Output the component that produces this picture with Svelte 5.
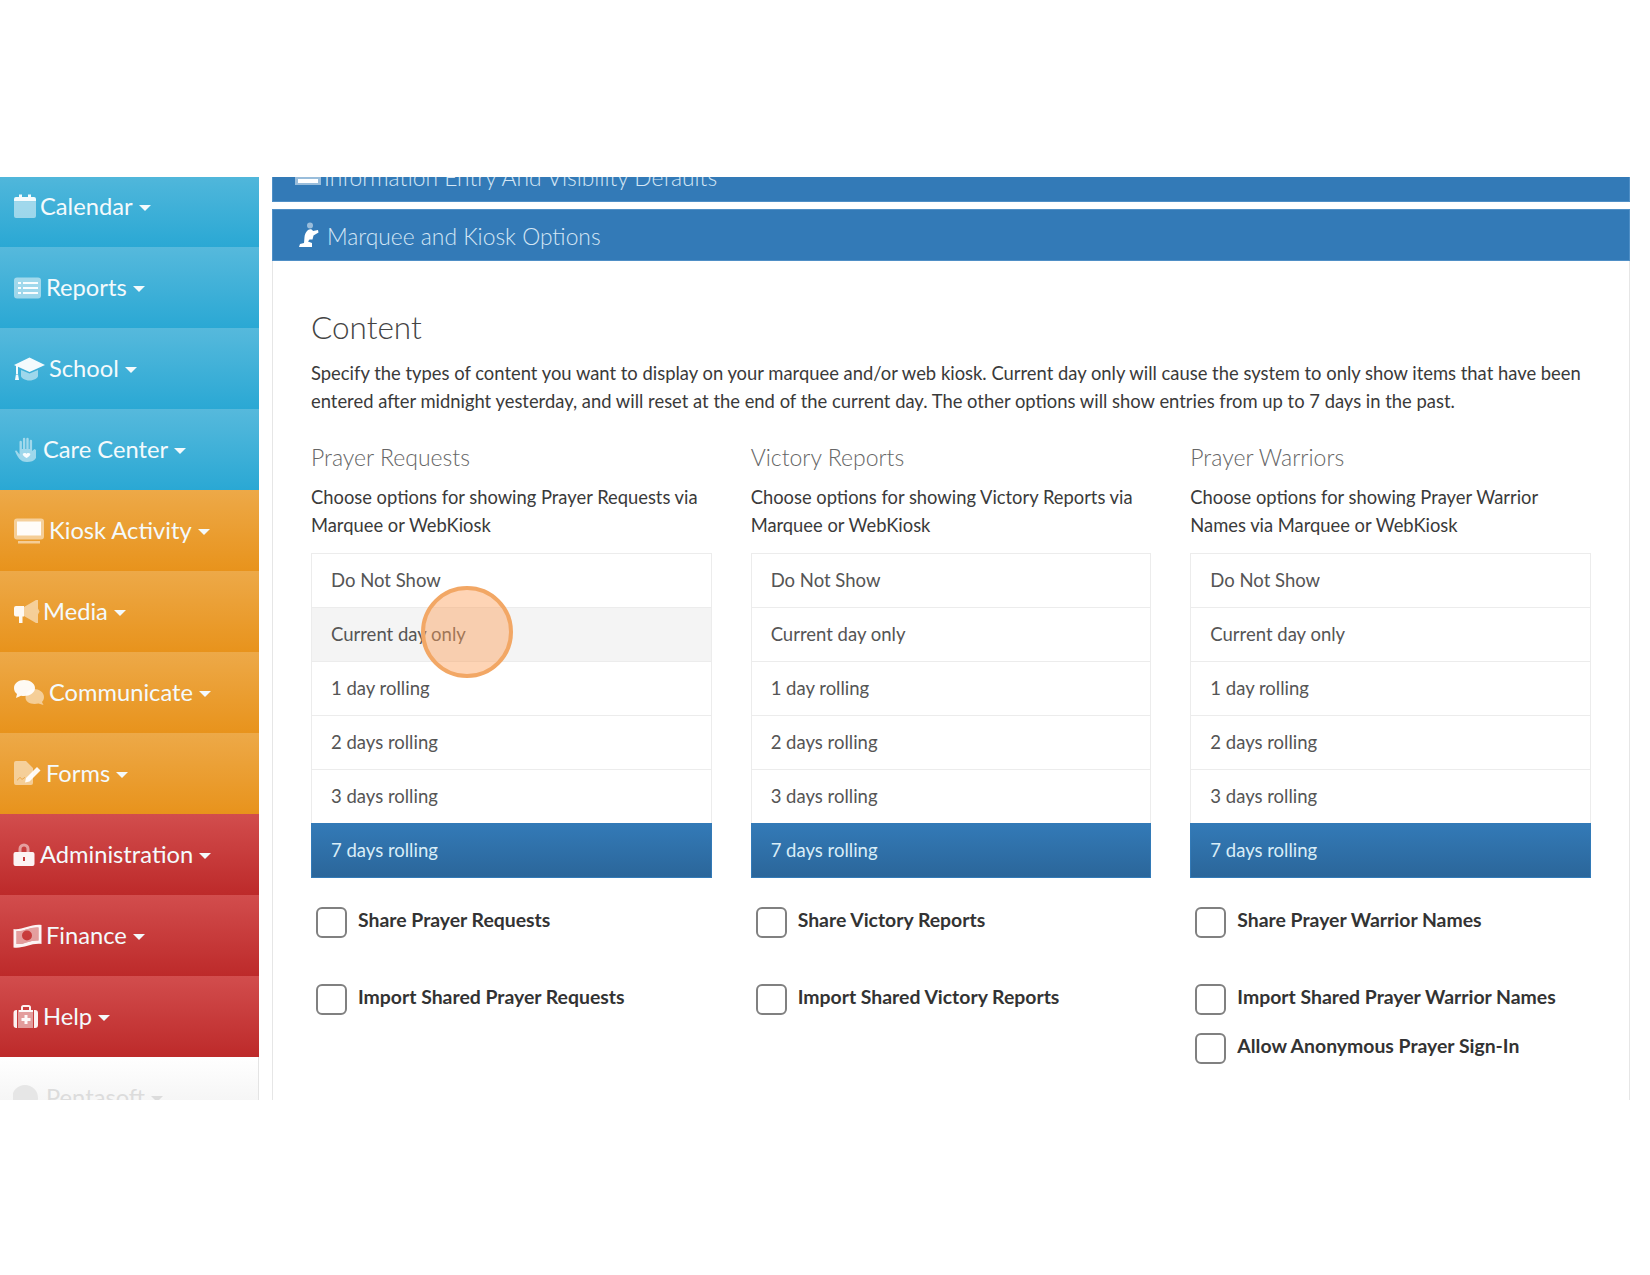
<script lang="ts">
  type NavItem = {
    label: string;
    tone: string;
    width: number;
    soft: string;
    solid: string;
  };

  const navItems: NavItem[] = [
    {
      label: "Calendar",
      tone: "blue",
      width: 27,
      soft: "M1 9h22v14a2 2 0 0 1-2 2H3a2 2 0 0 1-2-2z",
      solid: "M3 4h3V1.500h3V4h6V1.500h3V4h3a2 2 0 0 1 2 2v2.500H1V6a2 2 0 0 1 2-2z",
    },
    {
      label: "Reports",
      tone: "blue",
      width: 33,
      soft: "M4 3.500h21a3 3 0 0 1 3 3v15a3 3 0 0 1-3 3H4a3 3 0 0 1-3-3v-15a3 3 0 0 1 3-3z",
      solid: "M5 8h3v2H5zM10 8h15v2H10zM5 13h3v2H5zM10 13h15v2H10zM5 18h3v2H5zM10 18h15v2H10z",
    },
    {
      label: "School",
      tone: "blue",
      width: 36,
      soft: "M8 15l8.500 3.500L25 15v6c0 2-4 4.500-8.500 4.500S8 23 8 21z",
      solid: "M16.500 2.500L32 10 16.500 17 5 11.800V19l1 6H2l1-6v-8.100L1 10zM3.500 19h1v1h-1z",
    },
    {
      label: "Care Center",
      tone: "blue",
      width: 30,
      soft: "M1.500 15l2-.500 3 4V6a1.200 1.200 0 0 1 2.400 0v7h1V3a1.200 1.200 0 0 1 2.400 0v10h1V3a1.200 1.200 0 0 1 2.400 0v10h1V5a1.200 1.200 0 0 1 2.400 0v10l2.400-2 1.500 1v8c-2 3-5 4-9 4-7 0-9.500-5-12-11z",
      solid: "M10 17.500c1.500-1 3-.500 3.500.5.500-1 2-1.500 3.500-.5 1 1-.5 3-3.500 4.500-3-1.500-4.500-3.500-3.500-4.500z",
    },
    {
      label: "Kiosk Activity",
      tone: "orange",
      width: 36,
      soft: "M4 1.500h24a3 3 0 0 1 3 3v15a3 3 0 0 1-3 3H4a3 3 0 0 1-3-3v-15a3 3 0 0 1 3-3zM5 24h22v2.500H5z",
      solid: "M4 4.500h24v14H4z",
    },
    {
      label: "Media",
      tone: "orange",
      width: 30,
      soft: "M11 9l12-7h2v23h-2l-12-7zM25 10.500l1.500 3-1.500 3z",
      solid: "M3 8h8v10.500H9.500V25H6v-6.500H3a2 2 0 0 1-2-2V10a2 2 0 0 1 2-2z",
    },
    {
      label: "Communicate",
      tone: "orange",
      width: 36,
      soft: "M21 10c5 0 10 3 10 8 0 2-1 4-2 5l1.500 3-5-1.500c-7 1.500-13-1-13-6 0-5 4-8.500 8.500-8.500z",
      solid: "M11 1c6 0 11 3.500 11 8s-5 8-11 8c-1 0-2 0-3-.300L3 19l1-4C2 13.500 1 11.500 1 9c0-4.500 4.500-8 10-8z",
    },
    {
      label: "Forms",
      tone: "orange",
      width: 33,
      soft: "M1 3a2 2 0 0 1 2-2h10l7 7v15a2 2 0 0 1-2 2H3a2 2 0 0 1-2-2zM4 20l3-3 2 2 3-2v.8l-3 2-2-2-3 3z",
      solid: "M13 18l11-11 3.500 3.500-11 11-4.500 1z",
    },
    {
      label: "Administration",
      tone: "red",
      width: 27,
      soft: "M5.500 11V8a5.500 5.500 0 0 1 11 0v3h-3V8a2.500 2.500 0 0 0-5 0v3z",
      solid: "M2.500 11h17a2 2 0 0 1 2 2v10a2 2 0 0 1-2 2h-17a2 2 0 0 1-2-2V13a2 2 0 0 1 2-2zM10 16v4h2v-4z",
    },
    {
      label: "Finance",
      tone: "red",
      width: 33,
      soft: "M3.500 9C10 10 17 4.500 25.500 5.500v13C18 17.500 10 23 3.500 22zM14 8.500a5 5 0 1 0 0 10 5 5 0 0 0 0-10z",
      solid: "M.5 7C9 8.500 18 1.500 28.500 3v19C19 20.500 10 27 .5 25.500zM3.500 9v13C10 23 18 17.500 25.500 18.500v-13C17 4.500 10 10 3.500 9z",
    },
    {
      label: "Help",
      tone: "red",
      width: 30,
      soft: "M5 7h15v18H5z",
      solid: "M8 7V4.500A2.500 2.500 0 0 1 10.500 2h5A2.500 2.500 0 0 1 18 4.500V7h4a3 3 0 0 1 3 3v12a3 3 0 0 1-3 3h-1V7h-1v2H6V7zM3.500 7H4v18h-.500a3 3 0 0 1-3-3V10a3 3 0 0 1 3-3zM10 4v3h6V4zM11.500 12h3v3h3v3h-3v3h-3v-3h-3v-3h3z",
    },
  ];

  const options = [
    "Do Not Show",
    "Current day only",
    "1 day rolling",
    "2 days rolling",
    "3 days rolling",
    "7 days rolling",
  ];

  const columns = [
    {
      title: "Prayer Requests",
      intro: "Choose options for showing Prayer Requests via Marquee or WebKiosk",
      hovered: "Current day only",
      checks: ["Share Prayer Requests", "Import Shared Prayer Requests"],
      extra: "",
    },
    {
      title: "Victory Reports",
      intro: "Choose options for showing Victory Reports via Marquee or WebKiosk",
      hovered: "",
      checks: ["Share Victory Reports", "Import Shared Victory Reports"],
      extra: "",
    },
    {
      title: "Prayer Warriors",
      intro: "Choose options for showing Prayer Warrior Names via Marquee or WebKiosk",
      hovered: "",
      checks: ["Share Prayer Warrior Names", "Import Shared Prayer Warrior Names"],
      extra: "Allow Anonymous Prayer Sign-In",
    },
  ];
</script>

<div class="frame">
  <nav class="sidebar">
    {#each navItems as item}
      <a class="nav-item {item.tone}" href="#top">
        <svg class="nav-icon" width={item.width} height="28" viewBox="0 0 {item.width} 28" aria-hidden="true">
          <path d={item.soft} fill="#fff" opacity="0.5" fill-rule="evenodd" />
          <path d={item.solid} fill="#fff" opacity="0.94" fill-rule="evenodd" />
        </svg>
        <span>{item.label}</span>
        <i class="caret"></i>
      </a>
    {/each}
    <a class="nav-item plain" href="#top">
      <svg class="nav-icon" width="33" height="28" viewBox="0 0 33 28" aria-hidden="true">
        <path d="M12 1a13 13 0 1 0 0 26 13 13 0 0 0 0-26z" fill="#e6e6e6" />
      </svg>
      <span>Pentasoft</span>
      <i class="caret"></i>
    </a>
  </nav>

  <main class="main">
    <div class="panel-heading first">
      <svg width="28" height="24" viewBox="0 0 28 24" aria-hidden="true">
        <path d="M1 12h26v9H1z" fill="#fff" opacity="0.5" />
        <path d="M4 15h20v4H4z" fill="#fff" />
      </svg>
      <span>Information Entry And Visibility Defaults</span>
    </div>

    <div class="panel-heading">
      <svg width="22" height="26" viewBox="0 0 22 26" aria-hidden="true">
        <circle cx="12" cy="3.500" r="3" fill="#fff" opacity="0.5" />
        <path d="M10 8c2-1 4-1 5 1l5-1 .5 2.500-5 3-1 4h-3l-1.500 2 4 1.500V25H1l1-3 4-1 .5-6c0-2 1.500-5.500 3.500-7z" fill="#fff" />
      </svg>
      <span>Marquee and Kiosk Options</span>
    </div>

    <section class="panel-body">
      <h2>Content</h2>
      <p class="lead">
        Specify the types of content you want to display on your marquee and/or web kiosk. Current day only will cause the system to only show items that have been entered after midnight yesterday, and will reset at the end of the current day. The other options will show entries from up to 7 days in the past.
      </p>

      <div class="columns">
        {#each columns as col}
          <div class="column">
            <h3>{col.title}</h3>
            <p class="intro">{col.intro}</p>

            <ul class="list">
              {#each options as option, i}
                <li
                  class:hovered={option === col.hovered}
                  class:active={i === options.length - 1}
                >
                  {option}
                  {#if option === col.hovered}
                    <span class="click-dot"></span>
                  {/if}
                </li>
              {/each}
            </ul>

            <div class="checks">
              {#each col.checks as check}
                <label class="check">
                  <span class="box"></span>
                  <b>{check}</b>
                </label>
              {/each}
              {#if col.extra}
                <label class="check extra">
                  <span class="box"></span>
                  <b>{col.extra}</b>
                </label>
              {/if}
            </div>
          </div>
        {/each}
      </div>
    </section>
  </main>
</div>

<style>
  :global(body) {
    background: #fff;
    font-family: Lato, "Open Sans", sans-serif;
  }

  .frame {
    display: flex;
    width: 1650px;
    height: 923px;
    margin-top: 177px;
    overflow: hidden;
  }

  .sidebar {
    flex: 0 0 259px;
    margin-top: -11px;
  }

  .nav-item {
    display: flex;
    align-items: center;
    height: 81px;
    padding-left: 13px;
    box-sizing: border-box;
    color: #f4fafc;
    font-size: 23.700px;
    text-decoration: none;
  }

  .nav-item span {
    margin-bottom: 2px;
  }

  .nav-item.blue {
    background: linear-gradient(#56b9dc, #2aa8d4);
  }

  .nav-item.orange {
    background: linear-gradient(#eda948, #e8931c);
  }

  .nav-item.red {
    background: linear-gradient(#d24d4d, #bd2a2a);
  }

  .nav-item.plain {
    background: linear-gradient(#fff, #eee);
    color: #dcdcdc;
    border-right: 1px solid #e4e4e4;
  }

  .nav-icon {
    flex: none;
  }

  .caret {
    margin-left: 6px;
    margin-top: 3px;
    border-top: 6px solid currentColor;
    border-left: 6px solid transparent;
    border-right: 6px solid transparent;
  }

  .main {
    position: relative;
    flex: 0 0 1358px;
    margin-left: 13px;
    margin-top: -27px;
  }

  .panel-heading {
    display: flex;
    align-items: center;
    gap: 7px;
    height: 52px;
    padding-left: 25px;
    box-sizing: border-box;
    background: #337ab7;
    border: 1px solid #4f8fc6;
    color: #d3e6f5;
    font-size: 22.800px;
    font-weight: 300;
  }

  .panel-heading span {
    margin-top: 1px;
  }

  .panel-heading.first {
    gap: 2px;
    margin-bottom: 7px;
    padding-left: 21px;
  }

  .panel-body {
    height: 900px;
    padding: 45px 38px 0;
    box-sizing: border-box;
    border-left: 1px solid #e6e6e6;
    border-right: 1px solid #e6e6e6;
  }

  h2 {
    margin: 0;
    color: #444;
    font-size: 31.500px;
    font-weight: 300;
    line-height: 42px;
  }

  .lead {
    margin: 12px 0 0;
    color: #3a3a3a;
    font-size: 18.400px;
    line-height: 27.500px;
  }

  .columns {
    display: grid;
    grid-template-columns: repeat(3, 1fr);
    gap: 39px;
    margin-top: 26px;
  }

  h3 {
    margin: 0;
    color: #666;
    font-size: 23px;
    font-weight: 300;
    line-height: 32px;
  }

  .intro {
    margin: 10px 0 0;
    color: #3a3a3a;
    font-size: 18.350px;
    line-height: 28px;
  }

  .list {
    margin: 14px 0 0;
    padding: 0;
    list-style: none;
  }

  .list li {
    position: relative;
    height: 55px;
    margin-top: -1px;
    padding-left: 19px;
    box-sizing: border-box;
    border: 1px solid #ececec;
    color: #555;
    font-size: 18.500px;
    line-height: 52px;
  }

  .list li:first-child {
    margin-top: 0;
  }

  .list li.hovered {
    background: #f4f4f4;
  }

  .list li.active {
    background: linear-gradient(#337ab7, #2b669a);
    border-color: #337ab7;
    color: #d9edf7;
  }

  .click-dot {
    position: absolute;
    z-index: 1;
    left: 109px;
    top: -22px;
    width: 92px;
    height: 92px;
    box-sizing: border-box;
    border: 4px solid #f2a765;
    border-radius: 50%;
    background: rgba(252, 160, 90, 0.45);
  }

  .checks {
    display: flex;
    flex-direction: column;
    margin-top: 29px;
  }

  .check {
    display: flex;
    align-items: flex-start;
    gap: 11px;
    min-height: 77px;
    padding-left: 5px;
    color: #333;
    font-size: 19.400px;
  }

  .check.extra {
    min-height: 0;
    margin-top: -28px;
  }

  .box {
    flex: none;
    width: 31px;
    height: 31px;
    box-sizing: border-box;
    border: 2.500px solid #808080;
    border-radius: 6px;
    background: #fff;
  }

  .check b {
    line-height: 26px;
  }
</style>
